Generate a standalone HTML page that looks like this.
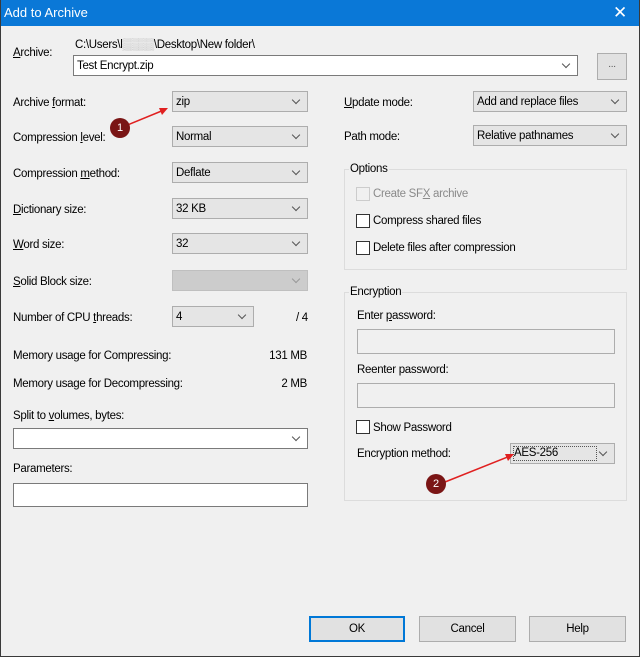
<!DOCTYPE html>
<html><head><meta charset="utf-8"><style>
*{margin:0;padding:0;box-sizing:border-box}
body{width:640px;height:657px;background:#f0f0f0;font-family:"Liberation Sans",sans-serif;font-size:11.5px;letter-spacing:-0.3px;color:#000;position:relative;overflow:hidden}
.a{position:absolute;white-space:nowrap;line-height:14px}
.frame{position:absolute;left:0;top:0;width:640px;height:657px;border:1px solid #3a3a3a;border-top:none}
.tb{position:absolute;left:0;top:0;width:640px;height:26px;background:#0a78d7;color:#fff;font-size:13px;letter-spacing:0}
.cb{position:absolute;background:#e5e5e5;border:1px solid #adadad;height:21px;padding:3px 3px 0;line-height:15px}
.cb::after{content:"";position:absolute;right:8px;top:5px;width:5px;height:5px;border-right:1px solid #555;border-bottom:1px solid #555;transform:rotate(45deg)}
.cb.w{background:#fff;border-color:#7a7a7a}
.cb.d{background:#cccccc;border-color:#bfbfbf}
.cb.d::after{border-color:#999}
.tx{position:absolute;background:#fff;border:1px solid #7a7a7a}
.tx.g{background:#f0f0f0;border-color:#adadad}
.ck{position:absolute;width:14px;height:14px;border:1px solid #333;background:#fff}
.gb{position:absolute;border:1px solid #dcdcdc}
.bt{position:absolute;background:#e1e1e1;border:1px solid #adadad;text-align:center;line-height:24px;height:26px}
.dot{position:absolute;width:20px;height:20px;border-radius:50%;background:#7a1515;color:#fff;font-size:11px;text-align:center;line-height:20px;letter-spacing:0}
u{text-decoration:underline}
</style></head><body>
<div class="tb"><span class="a" style="left:4px;top:6px">Add to Archive</span><span class="a" style="left:613px;top:4px;font-size:17px;line-height:17px">✕</span></div>

<span class="a" style="left:13px;top:46px"><u>A</u>rchive:</span>
<span class="a" style="left:75px;top:38px">C:\Users\l<span style="color:#bbb">▒▒▒▒</span>\Desktop\New folder\</span>
<div class="cb w" style="left:73px;top:55px;width:505px">Test Encrypt.zip</div>
<div class="bt" style="left:597px;top:53px;width:30px;height:27px;line-height:22px;font-size:10px;color:#555">...</div>

<span class="a" style="left:13px;top:96px">Archive <u>f</u>ormat:</span>
<div class="cb" style="left:172px;top:91px;width:136px">zip</div>
<span class="a" style="left:13px;top:131px">Compression <u>l</u>evel:</span>
<div class="cb" style="left:172px;top:126px;width:136px">Normal</div>
<span class="a" style="left:13px;top:167px">Compression <u>m</u>ethod:</span>
<div class="cb" style="left:172px;top:162px;width:136px">Deflate</div>
<span class="a" style="left:13px;top:203px"><u>D</u>ictionary size:</span>
<div class="cb" style="left:172px;top:198px;width:136px">32 KB</div>
<span class="a" style="left:13px;top:238px"><u>W</u>ord size:</span>
<div class="cb" style="left:172px;top:233px;width:136px">32</div>
<span class="a" style="left:13px;top:275px"><u>S</u>olid Block size:</span>
<div class="cb d" style="left:172px;top:270px;width:136px"></div>
<span class="a" style="left:13px;top:311px">Number of CPU <u>t</u>hreads:</span>
<div class="cb" style="left:172px;top:306px;width:82px">4</div>
<span class="a" style="left:296px;top:311px">/ 4</span>
<span class="a" style="left:13px;top:349px">Memory usage for Compressing:</span>
<span class="a" style="left:260px;top:349px;width:47px;text-align:right">131 MB</span>
<span class="a" style="left:13px;top:377px">Memory usage for Decompressing:</span>
<span class="a" style="left:260px;top:377px;width:47px;text-align:right">2 MB</span>
<span class="a" style="left:13px;top:409px">Split to <u>v</u>olumes, bytes:</span>
<div class="cb w" style="left:13px;top:428px;width:295px"></div>
<span class="a" style="left:13px;top:462px">Parameters:</span>
<div class="tx" style="left:13px;top:483px;width:295px;height:24px"></div>

<span class="a" style="left:344px;top:96px"><u>U</u>pdate mode:</span>
<div class="cb" style="left:473px;top:91px;width:154px">Add and replace files</div>
<span class="a" style="left:344px;top:130px">Path mode:</span>
<div class="cb" style="left:473px;top:125px;width:154px">Relative pathnames</div>

<div class="gb" style="left:344px;top:169px;width:283px;height:101px"></div>
<span class="a" style="left:349px;top:162px;background:#f0f0f0;padding:0 1px">Options</span>
<div class="ck" style="left:356px;top:187px;border-color:#ccc;background:#f0f0f0"></div>
<span class="a" style="left:373px;top:187px;color:#8a8a8a">Create SF<u>X</u> archive</span>
<div class="ck" style="left:356px;top:214px"></div>
<span class="a" style="left:373px;top:214px">Compress shared files</span>
<div class="ck" style="left:356px;top:241px"></div>
<span class="a" style="left:373px;top:241px">Delete files after compression</span>

<div class="gb" style="left:344px;top:292px;width:283px;height:209px"></div>
<span class="a" style="left:349px;top:285px;background:#f0f0f0;padding:0 1px">Encryption</span>
<span class="a" style="left:357px;top:309px">Enter <u>p</u>assword:</span>
<div class="tx g" style="left:357px;top:329px;width:258px;height:25px"></div>
<span class="a" style="left:357px;top:363px">Reenter password:</span>
<div class="tx g" style="left:357px;top:383px;width:258px;height:25px"></div>
<div class="ck" style="left:356px;top:420px"></div>
<span class="a" style="left:373px;top:421px">Show Password</span>
<span class="a" style="left:357px;top:447px">Encryption method:</span>
<div class="cb" style="left:510px;top:443px;width:105px;padding-top:2px"><span style="border:1px dotted #555;display:inline-block;width:84px;height:15px;line-height:13px;margin:-1px 0 0 -1px">AES-256</span></div>

<div class="bt" style="left:309px;top:616px;width:96px;border:2px solid #0078d7;line-height:22px">OK</div>
<div class="bt" style="left:419px;top:616px;width:97px">Cancel</div>
<div class="bt" style="left:529px;top:616px;width:97px">Help</div>

<svg style="position:absolute;left:0;top:0" width="640" height="657">
<line x1="125" y1="126" x2="164" y2="110" stroke="#e02020" stroke-width="1.5"/>
<polygon points="168,108 159,108 162,115" fill="#e02020"/>
<line x1="440" y1="484" x2="510" y2="456" stroke="#e02020" stroke-width="1.5"/>
<polygon points="514,454 505,454 508,461" fill="#e02020"/>
</svg>
<div class="dot" style="left:110px;top:118px">1</div>
<div class="dot" style="left:426px;top:474px">2</div>
<div class="frame"></div>
</body></html>
